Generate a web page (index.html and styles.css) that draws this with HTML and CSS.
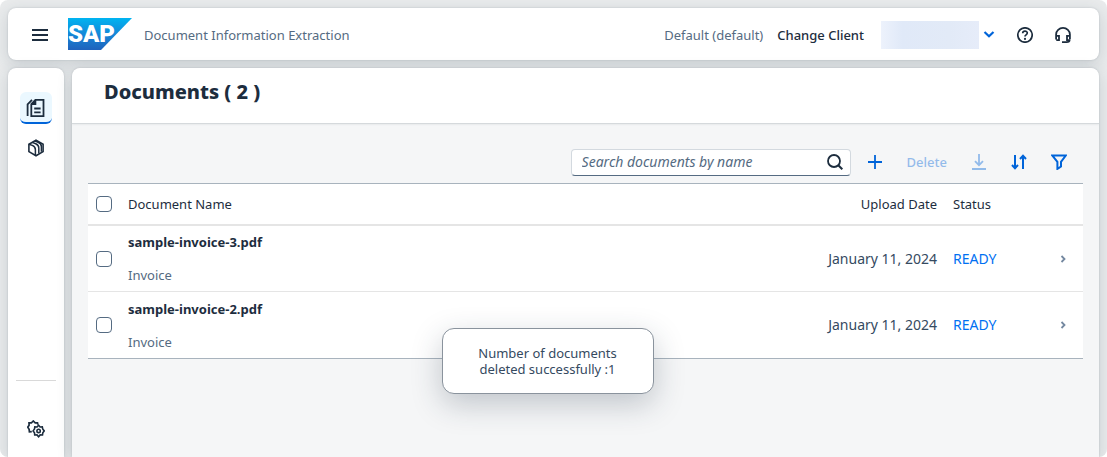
FILE: index.html
```html
<!DOCTYPE html>
<html lang="en">
<head>
<meta charset="utf-8">
<meta name="viewport" content="width=device-width, initial-scale=1">
<title>Document Information Extraction</title>
<link rel="stylesheet" href="styles.css">
</head>
<body>
<div class="shell">
  <header class="topbar">
    <button class="icon-btn" aria-label="Toggle menu">
      <svg width="16" height="16" viewBox="0 0 16 16"><path d="M0 3h16M0 8h16M0 13h16" stroke-width="2"/></svg>
    </button>
    <svg class="logo" width="64" height="32" viewBox="0 0 64 32" role="img" aria-label="SAP">
      <defs><linearGradient id="brand" x1="0" y1="0" x2="0" y2="1"><stop offset="0" stop-color="#00b4f1"/><stop offset=".5" stop-color="#1488d8"/><stop offset="1" stop-color="#1f62bc"/></linearGradient></defs>
      <path d="M0 0h64L33 32H0z" fill="url(#brand)"/>
      <text class="logo-text" x="0" y="24">SAP</text>
    </svg>
    <span class="product">Document Information Extraction</span>
    <span class="tenant">Default (default)</span>
    <button class="change-client">Change Client</button>
    <button class="account" aria-label="Account">
      <span class="account-name"></span>
      <svg width="12" height="12" viewBox="0 0 12 12"><path d="M1.5 3L6 7.3 10.500 3" stroke-width="2.2"/></svg>
    </button>
    <button class="icon-btn help" aria-label="Help">
      <svg width="16" height="16" viewBox="0 0 16 16"><circle cx="8" cy="8" r="7.2" stroke-width="1.7"/><path d="M5.7 6.3C5.7 3.4 10.3 3.5 10.3 6.1 10.3 7.9 8 7.8 8 9.4" stroke-width="1.7"/><circle class="solid" cx="8" cy="11.9" r="1.1"/></svg>
    </button>
    <button class="icon-btn" aria-label="Support">
      <svg width="16" height="16" viewBox="0 0 16 16"><path d="M1.1 12.5V7.5a6.9 6.6 0 0 1 13.8 0v5M1 8.8h3v4.4H1.3M15 8.8h-3v4.4h2.7M14.6 13c0 1.6-1.4 2.1-3 2.1H7" stroke-width="1.8"/></svg>
    </button>
  </header>
  <nav class="sidebar" aria-label="Main">
    <a href="#documents" class="nav-item active" aria-label="Documents">
      <svg width="20" height="20" viewBox="0 0 20 20"><path d="M9.4 1.8h8.1v16.4H5.3V6zM9.4 2v4H5.5M1.6 18V6.3L6 1.8M8.2 10.5h6.4M8.2 14.3h6.4" stroke-width="1.8"/></svg>
    </a>
    <a href="#schemas" class="nav-item" aria-label="Schemas">
      <svg width="16" height="18" viewBox="0 0 16 18"><path d="M.9 5.2v7.4L8 16.8l7.1-4.2V5.2L8 1.2z" stroke-width="1.6"/><path d="M.9 5.2l3.4 1.2c2.2.8 3.1 2.2 3.1 4.4v5.4M4.2 3.4l3.5 1.3c2.2.8 3.1 2.3 3.1 4.4v5.4M7 2l3.2 1.3c2.2.9 3.2 2.3 3.2 4.4v5" stroke-width="1.5"/></svg>
    </a>
    <a href="#settings" class="nav-item settings" aria-label="Settings">
      <svg width="18" height="18" viewBox="0 0 18 18"><path d="M4.800 11.600l-2.400.2-.3-2.600L.8 7.200l1.300-2-.1-2.300 2.400-.1L6.300 1l1.900 1.800 2.300.1.300 1.700" stroke-width="1.7"/><path d="M11.600 5.300l1.500 1.700 2.200-.2.400 2.200 1.500 1.900-1.400 1.900-.3 2.200-2.300-.1-1.600 1.800-1.600-1.800-2.300.1-.2-2.200-1.400-1.900 1.400-1.900.3-2.200 2.300.2z" stroke-width="1.6"/><circle cx="11.600" cy="10.900" r="1.700" stroke-width="1.6"/></svg>
    </a>
  </nav>
  <main class="page">
    <div class="page-head"><h1>Documents ( 2 )</h1></div>
    <div class="content">
      <div class="toolbar">
        <label class="search">
          <input type="search" placeholder="Search documents by name" aria-label="Search documents by name">
          <svg width="16" height="16" viewBox="0 0 16 16"><circle cx="7" cy="7" r="6" stroke-width="1.8"/><path d="M11.3 11.3L15.3 15.3" stroke-width="2"/></svg>
        </label>
        <button class="tool" aria-label="Add"><svg width="16" height="16" viewBox="0 0 16 16"><path d="M1 8h14M8 1v14" stroke-width="1.8"/></svg></button>
        <button class="tool delete" disabled>Delete</button>
        <button class="tool" disabled aria-label="Download"><svg width="16" height="16" viewBox="0 0 16 16"><path d="M8 0v11M4 7.2l4 4 4-4M1 15h14" stroke-width="1.8"/></svg></button>
        <button class="tool" aria-label="Sort"><svg width="16" height="16" viewBox="0 0 16 16"><path d="M4 1v13M1 11l3 3.2L7 11M12 15V2M9 5l3-3.2L15 5" stroke-width="2"/></svg></button>
        <button class="tool" aria-label="Filter"><svg width="16" height="16" viewBox="0 0 16 16"><path d="M1.2 1.5h13.6L10 7.8v4.7l-3.6 2.4V7.8z" stroke-width="2"/></svg></button>
      </div>
      <table class="docs">
        <thead>
          <tr><th class="col-check"><input type="checkbox" aria-label="Select all"></th><th>Document Name</th><th class="col-date">Upload Date</th><th class="col-status">Status</th><th class="col-nav"></th></tr>
        </thead>
        <tbody>
          <tr>
            <td class="col-check"><input type="checkbox" aria-label="Select sample-invoice-3.pdf"></td>
            <td><div class="doc"><strong>sample-invoice-3.pdf</strong><span>Invoice</span></div></td>
            <td class="col-date">January 11, 2024</td><td class="col-status ready">READY</td>
            <td class="col-nav"><svg width="8" height="8" viewBox="0 0 8 8"><path d="M2.5 1l3 3-3 3" stroke-width="1.8"/></svg></td>
          </tr>
          <tr>
            <td class="col-check"><input type="checkbox" aria-label="Select sample-invoice-2.pdf"></td>
            <td><div class="doc"><strong>sample-invoice-2.pdf</strong><span>Invoice</span></div></td>
            <td class="col-date">January 11, 2024</td><td class="col-status ready">READY</td>
            <td class="col-nav"><svg width="8" height="8" viewBox="0 0 8 8"><path d="M2.5 1l3 3-3 3" stroke-width="1.8"/></svg></td>
          </tr>
        </tbody>
      </table>
    </div>
  </main>
</div>
<div class="toast" role="status">Number of documents deleted successfully :1</div>
</body>
</html>
```
FILE: styles.css
```css
* { box-sizing: border-box; }
body {
  margin: 0;
  background: #fff;
  color: #1d2d3e;
  font: 13px/16px "Noto Sans", "Open Sans", sans-serif;
}
button, input { font: inherit; color: inherit; }
button { border: 0; padding: 0; background: none; cursor: pointer; }
svg { display: block; flex: none; fill: none; stroke: currentColor; }
.solid { fill: currentColor; stroke: none; }

.shell {
  display: grid;
  grid-template: auto 1fr / 56px 1fr;
  gap: 8px;
  height: 100vh;
  padding: 8px 8px 0;
  overflow: hidden;
  border-radius: 8px;
  background: #e9ebec;
}
.topbar, .sidebar, .page {
  background: #fff;
  box-shadow: 0 0 2px rgba(34, 53, 72, .2), 0 4px 16px rgba(34, 53, 72, .16);
}
.topbar {
  grid-column: 1 / -1;
  display: flex;
  align-items: center;
  height: 52px;
  padding: 2px 28px 0 24px;
  border-radius: 8px;
}
.logo { margin: 0 0 2px 20px; stroke: none; overflow: visible; }
.logo-text { font: 900 24px/1 Roboto, sans-serif; fill: #fff; }
.product { margin-left: 12px; color: #556b82; }
.tenant { margin-left: auto; color: #556b82; }
.change-client { margin-left: 14px; font-weight: 500; }
.account { display: flex; align-items: center; gap: 4px; margin-left: 17px; color: #0064d9; }
.account-name { width: 98px; height: 28px; background: linear-gradient(90deg, #edf2fc, #e0e9f8 22%, #e2eaf7 70%, #e6ecf9); }
.help { margin: 0 22px; }

.sidebar {
  display: flex;
  flex-direction: column;
  align-items: center;
  gap: 8px;
  padding: 24px 8px 12px;
  border-radius: 8px 8px 0 0;
}
.nav-item { display: grid; place-items: center; width: 32px; height: 32px; color: #1d2d3e; }
.nav-item.active { padding-top: 2px; background: #ebf8ff; border-bottom: 2px solid #0064d9; border-radius: 6px; }
.nav-item.settings { width: 100%; height: 65px; padding-top: 32px; margin-top: auto; border-top: 1px solid #d9d9d9; }

.page { min-width: 0; border-radius: 8px 8px 0 0; background: #f5f6f7; overflow: hidden; }
.page-head { padding: 12px 32px 19px; background: #fff; border-bottom: 1px solid #d5d9dc; border-radius: 8px 8px 0 0; box-shadow: 0 1px 2px rgba(34, 53, 72, .06); }
h1 { margin: 0; font-size: 20px; line-height: 24px; font-weight: 800; }
.content { padding: 22px 16px; }
.toolbar { display: flex; align-items: center; justify-content: flex-end; gap: 24px; padding: 0 16px 5px 0; }
.search {
  display: flex;
  align-items: center;
  width: 280px;
  height: 27px;
  margin-right: -8px;
  padding: 0 7px 0 10px;
  background: #fff;
  border: 1px solid #d3d9df;
  border-bottom-color: #556b82;
  border-radius: 4px;
}
.search input { flex: 1; min-width: 0; border: 0; padding: 0; background: none; outline: 0; font-size: 14px; }
.search input::placeholder { color: #556b82; font-style: italic; opacity: 1; }
.tool { min-height: 32px; color: #0064d9; font-weight: 500; }
.tool:disabled { opacity: .4; }

.docs { width: 100%; border-collapse: separate; border-spacing: 0; background: #fff; border-top: 1px solid #a8b3bd; border-bottom: 1px solid #a8b3bd; }
.docs th, .docs td { padding: 0 8px; text-align: left; font-weight: 400; }
.docs th { height: 42px; border-bottom: 2px solid #e5e5e5; }
.docs td { height: 66px; border-bottom: 1px solid #e5e5e5; color: #354a5f; }
.docs tbody tr:last-child td { border-bottom: 0; }
.docs .col-check { width: 32px; }
.docs .col-date { width: 130px; text-align: right; white-space: nowrap; }
.docs .col-status { width: 98px; }
.docs .col-nav { width: 40px; color: #7488a0; }
.docs td.col-date, .docs td.ready { font-size: 14px; }
.docs .ready { color: #0070f2; }
.docs .col-nav svg { margin: 0 auto; }
.docs input { display: block; appearance: none; width: 16px; height: 16px; margin: 0; border: 1px solid #556b82; border-radius: 4px; background: #fff; }
.docs input:checked { background: #0064d9; }
.doc { display: flex; flex-direction: column; gap: 17px; }
.doc strong { color: #1d2d3e; font-weight: 700; }
.doc span { color: #556b82; }

.toast {
  position: absolute;
  left: calc(50% - 112px);
  bottom: 63px;
  width: 212px;
  padding: 16px 32px;
  border: 1px solid #8a939d;
  border-radius: 12px;
  background: #fff;
  color: #354a5f;
  text-align: center;
  box-shadow: 0 10px 30px rgba(34, 53, 72, .25);
}
```
